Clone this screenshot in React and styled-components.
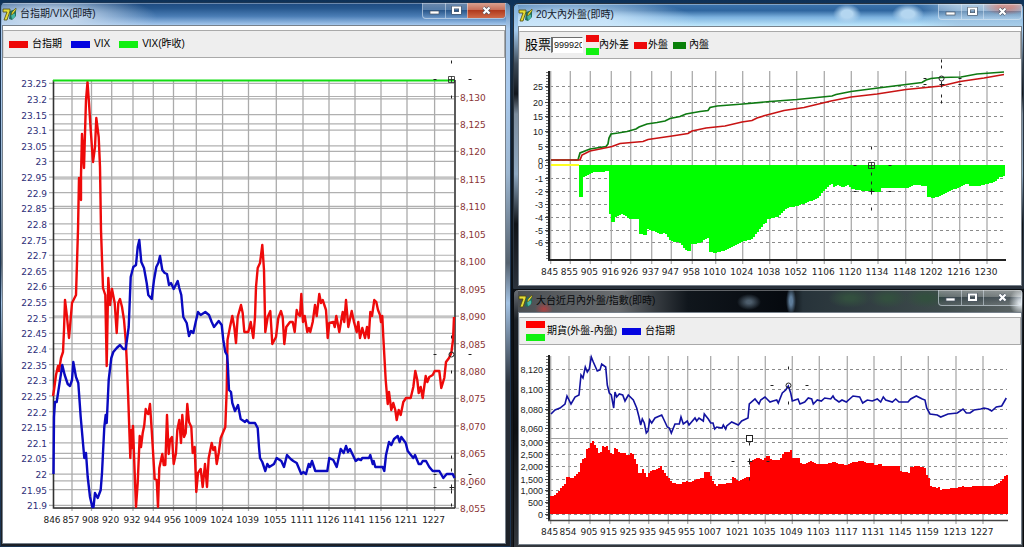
import {Component} from "react";
import styled, {createGlobalStyle} from "styled-components";

const GlobalStyle = createGlobalStyle`
  *, *::before, *::after {
    box-sizing: border-box;
  }

  body {
    margin: 0;
    background: #16232f;
    font-family: "Liberation Sans", "Noto Sans CJK TC", sans-serif;
    font-size: 10px;
    color: #000;
  }
`

const Desktop = styled.main`
  display: grid;
  grid-template-columns: 1fr 1fr;
  column-gap: 2px;
  align-items: start;
  min-height: 100vh;
  background: linear-gradient(#0e3157 0, #123a63 24px, #16232f 90px, #0b0f14 300px, #1a1d22 100%);
`

const Column = styled.div`
  display: flex;
  flex-direction: column;
  min-width: 0;
  padding-top: ${props => props.$top}px;
`

const skins = {
    active: {
        frame: `linear-gradient(#5b82ab 0, #a9c9ec 26px, #a9c9ec 90px, #9cb6d0 170px, #55616e 260px, #a4c3e4 300px, #2b323c 380px, #1c2026 100%)`,
        title: `
          radial-gradient(ellipse 110px 24px at 45px 14px, rgba(205, 222, 240, 0.85) 30%, rgba(205, 222, 240, 0) 100%),
          linear-gradient(#1d4a80 0, #27588f 25%, #4a7db5 60%, #a6c9ef 100%)`,
        text: '#14202c',
        edge: '#1b3553'
    },
    glass: {
        frame: `linear-gradient(#7fb0dc 0, #a6cdf0 26px, #3c4a58 60px, #11161c 90px, #7c8c9c 110px, #8fa9c2 170px, #0f1318 220px, #2b323c 100%)`,
        title: `
          radial-gradient(ellipse 14px 10px at 329px 10px, #b4d6f0 40%, rgba(168, 205, 238, 0) 100%),
          radial-gradient(ellipse 16px 10px at 390px 10px, #b4d6f0 40%, rgba(168, 205, 238, 0) 100%),
          radial-gradient(ellipse 24px 9px at 488px 2px, rgba(196, 84, 70, 0.8) 30%, rgba(196, 84, 70, 0) 100%),
          radial-gradient(ellipse 130px 26px at 50px 18px, rgba(204, 230, 250, 0.9) 30%, rgba(196, 222, 246, 0) 100%),
          linear-gradient(90deg, rgba(160, 195, 225, 0) 400px, rgba(160, 195, 225, 0.7) 440px),
          linear-gradient(#3c74ad 0, #2f669f 30%, #7db2df 60%, #bfe8fc 100%)`,
        text: '#14202c',
        edge: '#28333f'
    },
    dark: {
        frame: `linear-gradient(#6a6f75 0, #1b2026 30px, #0d1014 140px, #33383e 100%)`,
        title: `
          radial-gradient(ellipse 12px 8px at 231px 12px, #4d5d6b 20%, rgba(77, 93, 107, 0) 100%),
          radial-gradient(ellipse 5px 14px at 273px 11px, #5f7d9a 30%, rgba(95, 125, 154, 0) 100%),
          radial-gradient(ellipse 22px 10px at 332px 8px, #33503f 20%, rgba(51, 80, 63, 0) 100%),
          radial-gradient(ellipse 20px 10px at 370px 8px, #33503f 20%, rgba(51, 80, 63, 0) 100%),
          radial-gradient(ellipse 22px 10px at 408px 8px, #33503f 20%, rgba(51, 80, 63, 0) 100%),
          radial-gradient(ellipse 12px 14px at 503px 12px, #dfe6ea 20%, rgba(223, 230, 234, 0) 100%),
          radial-gradient(ellipse 9px 7px at 26px 19px, rgba(200, 60, 60, 0.7) 10%, rgba(200, 60, 60, 0) 100%),
          linear-gradient(90deg, #4b4f53 0, #6a6d70 100px, #3a3f44 135px, #10161c 170px, #05090e 270px, #27333a 285px, #3d4a4b 420px, #5d6566 100%)`,
        text: '#07090b',
        edge: '#0a0c0f'
    }
}

const WindowFrame = styled.section`
  border: 1px solid ${props => props.$skin.edge};
  border-radius: 5px 5px 0 0;
  padding: ${props => props.$side === 'left' ? '0 4px 2px 1px' : '0 1px 2px 4px'};
  background: ${props => props.$skin.frame};
  overflow: hidden;
`

const TitleBar = styled.header`
  display: flex;
  align-items: center;
  height: 22px;
  background: ${props => props.$skin.title};
  box-shadow: inset 0 1px 0 rgba(255, 255, 255, 0.35);
`

const Title = styled.h1`
  flex: 1;
  margin: 0 0 0 3px;
  font-size: 10px;
  line-height: 14px;
  font-weight: normal;
  color: ${props => props.$skin.text};
  white-space: nowrap;
`

const WindowButtons = styled.div`
  display: flex;
  align-self: flex-start;
  border: 1px solid rgba(225, 236, 246, 0.6);
  border-top: 0;
  border-radius: 0 0 4px 4px;
  overflow: hidden;
`

const WindowButton = styled.button`
  display: flex;
  align-items: center;
  justify-content: center;
  width: ${props => props.$close ? 38 : 22}px;
  height: 15px;
  padding: 0;
  border: 0;
  border-left: ${props => props.$first ? 0 : 1}px solid rgba(225, 236, 246, 0.5);
  background: ${props => props.$red
    ? 'linear-gradient(#d9a08f 0, #c8705a 45%, #b03a1e 50%, #cf6a48 100%)'
    : 'linear-gradient(rgba(255, 255, 255, 0.35) 0, rgba(255, 255, 255, 0.2) 45%, rgba(10, 30, 60, 0.15) 50%, rgba(255, 255, 255, 0.1) 100%)'};
`

const Body = styled.div`
  border: 1px solid #77818b;
  background: #fff;
`

const ToolStrip = styled.div`
  display: flex;
  align-items: center;
  height: 28px;
  margin-top: 4px;
  padding-left: ${props => props.$pad}px;
  border: 1px solid #a9a9a9;
  border-left-color: #d8d8d8;
  background: #eeeeee;
  white-space: nowrap;
  overflow: hidden;
`

const Legend = styled.ul`
  display: flex;
  align-items: center;
  gap: ${props => props.$gap}px;
  margin: 0;
  padding: 0;
  list-style: none;
`

const LegendItem = styled.li`
  display: flex;
  align-items: center;
  gap: ${props => props.$gap}px;
  line-height: 14px;
`

const Swatch = styled.span`
  width: ${props => props.$width}px;
  height: 7px;
  background: ${props => props.$color};
`

const SwatchPair = styled.span`
  display: flex;
  flex-direction: column;
  gap: 6px;
  background: #f5e9e9;
`

const StockLabel = styled.label`
  font-size: 13px;
  line-height: 18px;
`

const StockInput = styled.input`
  width: 32px;
  height: 16px;
  margin-right: 3px;
  padding: 0 0 0 1px;
  border: 1px solid #fff;
  border-top-color: #6d6d6d;
  border-left: 2px solid #6d6d6d;
  border-radius: 0;
  background: #fff;
  font-family: "Liberation Sans", sans-serif;
  font-size: 9px;
  color: #111;
  outline: none;
`

const ChartSvg = styled.svg`
  display: block;
  width: 100%;
  height: auto;
`

const AxisText = styled.text`
  font-family: ${props => props.$narrow ? '"Liberation Sans"' : '"DejaVu Sans"'}, sans-serif;
  font-size: 9px;
  fill: ${props => props.$color || '#222'};
  text-anchor: ${props => props.$anchor || 'middle'};
`

const AppIcon = () => (
    <svg width="15" height="15" viewBox="0 0 15 15" aria-hidden="true">
        <path d="M8 4 L14 2 L14 9 L10 13 L7 12 Z" fill="#1f6e5e" />
        <path d="M9 8 Q11 5 13 7 Q14 11 10 12 Z" fill="#49b6a4" />
        <path d="M1 2 L8 2 L8 4 L5 13 L2 13 L5 5 L1 5 Z" fill="#e6dc35" stroke="#4d4a10" strokeWidth="0.8" />
        <path d="M14 1 L10 5 L9 8 L11 7 L14 3 Z" fill="#e6dc35" stroke="#4d4a10" strokeWidth="0.6" />
    </svg>
)

const MinimizeGlyph = () => (
    <svg width="11" height="9" viewBox="0 0 11 9" aria-hidden="true">
        <rect x="1" y="5" width="9" height="3" fill="#fff" stroke="#4b5665" strokeWidth="0.7" />
    </svg>
)

const MaximizeGlyph = () => (
    <svg width="11" height="9" viewBox="0 0 11 9" aria-hidden="true">
        <rect x="2" y="1.5" width="7" height="5.5" fill="none" stroke="#4b5665" strokeWidth="3.2" />
        <rect x="2" y="1.5" width="7" height="5.5" fill="none" stroke="#fff" strokeWidth="2" />
    </svg>
)

const CloseGlyph = () => (
    <svg width="11" height="9" viewBox="0 0 11 9" aria-hidden="true">
        <path d="M2.5 1.5 L8.5 7.5 M8.5 1.5 L2.5 7.5" stroke="#4b5665" strokeWidth="3.4" />
        <path d="M2.5 1.5 L8.5 7.5 M8.5 1.5 L2.5 7.5" stroke="#fff" strokeWidth="2.2" />
    </svg>
)

const vixRed = "53,396 54,390 56,375 58,366 59,371 61,358 63,352 64,330 65,300 67,317 69,338 70,327 72,303 76,295 78,230 79,178 81,200 81,175 82,134 84,168 85,133 86,100 87.5,82 89,103 90.5,127 93,162 95,147 96.3,118 98.7,137 100,167 101,230 103,288 105.3,295 106.7,366 108.3,278 110,305 112,289 114.7,303 116.7,333 118.3,303 120,299 122,307 124,320 125.7,340 126.7,360 128.3,400 130.3,458 131.3,430 132,448 133,426 134.3,463 136,507 137.7,483 139.7,436 141,447 142.7,433 144.3,425 145.7,409 147,413 148.3,414 150,404 151.7,430 154.7,479 156.7,480 158,507 159.3,468 162.3,454 163.7,465 165.3,465 167,415 168.7,454 170,440 172,437 173.7,464 176,453 177.3,430 179.3,420 181,443 182.3,415 184,437 185.7,433 187.3,404 189,422 191.3,427 192.7,453 194.7,447 196.3,492 198,473 200.7,469 202.7,487 205,464 207,487 208.7,458 211.7,443 213.3,450 215,447 216.7,464 218.7,453 220.7,438 225.3,427 226.7,390 227.5,340 230,327 232.3,316 234.3,327 236,343 237.7,317 241,305 242.7,313 244.3,332 248.3,332 250.7,322 253.3,338 255,317 256,287 257.7,268 260,263 262.3,245 264,270 265.3,332 267.7,317 270.3,311 272.3,344 276,337 278.3,318 281,311 282.7,317 284.3,344 286.3,327 290,322 292.7,322 294.7,332 296.7,310 298,314 300,316 301.3,294 303,322 304.7,316 307.3,332 309,328 310.3,332 312.7,322 315,305 316.7,316 319.3,294 321,303 322.7,300 326,310 327.7,338 329.3,323 333.3,322 334.7,327 336.3,316 339.3,332 342.7,312 344.3,322 346,300 348.3,327 351.7,311 354,322 356.7,332 358.3,322 360,338 362.3,328 365,338 367,327 368.7,338 370.3,312 372,316 374.3,300 376.3,302 378,310 380,315 381,322 382.3,316 383.3,337 384.3,355 385.7,380 387.7,404 389,392 391.3,410 393.3,403 395.3,410 396.7,420 398.7,410 400.7,415 403.3,402 406,398 410.7,398 413.3,387 415.3,371 417.3,380 418.7,393 420.7,387 422.7,398 425.7,376 427.3,382 429.3,377 432.7,375 434.7,371 439.3,371 441.3,388 444.3,378 446,362 449,358 451.3,353 453,340 454,317"

const vixBlue = "53.5,474 54,417 55,402 56.7,402 62.3,365 64.7,375 67.7,384 70,386 72,380 73.3,362 76,377 78.3,383 80.7,417 84.3,458 86,453 87.7,477 90,497 92.3,507 93.5,507 95,493 97.7,498 100.7,490 102,473 104.3,427 105.7,415 106.7,423 108.7,380 111.3,358 113.3,352 116.7,348 120,345 123.3,349 125.7,349 128.7,327 130.7,277 133.3,267 136,265 137.7,247 139.3,240 141.3,262 144,268 146.7,283 148.3,295 151.7,299 154,280 156.3,267 158.3,263 160,256 162.3,270 164.7,273 167,274 169,285 171,283 173.7,289 177.7,281 179.3,288 181.3,295 183.3,317 186.7,323 189,336 191,331 193.3,333 195.7,322 198,312 200.7,315 205.3,312 209,315 211.7,322 214,327 218.7,321 221.7,325 223.3,340 225.3,352 227,355 227.7,363 229,390 231,392 232.3,403 235,411 238,405 240.7,419 245,422 246.7,420 249.3,423 255,423 257.7,428 259,447 260,458 262.3,462 265.3,471 267.3,464 269.3,467 274,464 276.7,458 281.3,461 284,467 287,455 290.7,459 293.3,461 296.7,463 301.3,474 303.3,472 306,474 308.7,464 310,467 312,461 315.3,471 327.3,471 329.3,458 333.3,460 336.7,467 340.7,449 343.7,453 346,446 348,452 350,449 355.7,461 358.3,459 361,460 362.3,458 369,458 370.3,455 372.7,464 373.7,461 375.3,467 382.7,467 384.3,471 386,455 389,442 391.3,445 394,439 397.7,436 399.7,442 401.3,437 405.7,443 407.7,451 413.3,458 415,455 418.7,464 421,464 422.7,461 426,461 429.3,467 432.7,471 439.3,471 443.3,478 446.7,474 452.7,474 454.5,478"

const outerGreen = "551,160 578,160 580,153 590,149 606,146.5 608,144 609,138 611,134 618,133 627,131.5 636,129 639,127 647,124 657,122.5 665,121 670,118.5 680,116.5 686,114 700,111.5 708,110.5 710,107.5 717,106 743,104 770,101.5 797,99.5 832,96 836,94.5 851,91.5 878,88 906,84.5 922,82.5 926,80 931,78.5 941,77.5 961,77 977,74 1004,72"

const outerRed = "551,160 580,160 582,155 590,151 600,149 612,146.5 620,143.5 643,141.5 648,139.5 672,136 688,133.5 692,131 706,128 725,126 742,122 752,120.5 757,118 765,115.5 784,110.5 804,107.5 831,101 851,97 877,94 906,89.5 941,86 960,81.5 984,78 1004,74.5"

const netArea = [
    [579, 197], [581, 197], [582, 178], [585, 176], [592, 172], [600, 172], [607, 171], [608, 212], [610, 216], [611, 222], [614, 222], [615, 217], [621, 214], [626, 217], [630, 219], [637, 219], [638, 233], [639, 234], [645, 235], [646, 229], [652, 231], [660, 234], [664, 233], [670, 241], [680, 243], [684, 250], [689, 251], [690, 244], [700, 243], [704, 239], [708, 237], [709, 252], [714, 253], [725, 250], [733, 246], [742, 241], [750, 240], [756, 233], [764, 223], [766, 223], [767, 219], [777, 217], [786, 208], [797, 206], [807, 202], [816, 199], [822, 192], [829, 185], [831, 184], [832, 180], [833, 187], [838, 185], [842, 187], [847, 185], [851, 189], [864, 191], [879, 192], [881, 188], [907, 188], [914, 185], [925, 186], [927, 197], [932, 198], [939, 196], [947, 192], [961, 186], [966, 183], [969, 186], [977, 186], [994, 182], [999, 177], [1005, 176]
]

const indexBlue = "551,414 555,410 560,408 565,404 567,396 571,404 575,397 579,395 581,375 583,378 585.3,367 587.3,372 589.3,369 591.3,357 593.3,362 597.3,371 600,370 601.7,364 605.7,367 607.3,385 609.3,393 611.3,395 613.7,408 615,392 616.7,397 619.3,394 622.7,395 625,401 628.3,395 633.3,400 636.7,408 639,417 640.7,425 642.3,419 644.3,423 646.3,433 648,431 649.7,420 651.7,423 655,418 661.7,415 665,422 667.3,427 669.3,428 671.3,433 675,424 679.3,424 681,417 683.3,424 687.3,421 689,425 695,418 696.7,421 699,418 703.3,421 704.3,414 708.3,419 710.7,423 713,423 714.7,429 716.7,427 722,428 723.3,425 725.7,429 726.7,426 731.7,422 738.3,425 741.7,421 748,418 749.3,404 755,399 759,404 760.7,400 765,397 770,402 773,401 776.7,400 778.3,403 782.3,393 785.7,390 788.3,386 790.7,393 792.3,401 798,399 800,404 804.7,402 808.3,398 811.7,399 813.3,404 817.3,400 821.3,401 824.7,398 830.7,399 833,396 834.7,399 839,402 842,400 846.3,402 853,396 859.7,397 862.7,403 867.3,400 872.3,401 877.3,399 880.7,402 883.3,397 885.7,400 892.3,402 895.7,399 899,402 908,402 910.7,399 916.3,396 922.3,399 925,400 926.7,408 930,414 937.3,415 940.7,417 948,414 957.3,413 963,409 966.3,413 970,413 974,410 980.7,409 984,408 988.3,409 991.7,411 996.3,407 1001.7,406 1006.3,398"

const volumeArea = [
    [550, 496], [554, 495], [563, 485], [565, 483], [566, 477], [572, 478], [578, 472], [581, 459], [585, 457], [586, 449], [589, 448], [591, 438], [593, 443], [596, 448], [598, 453], [600, 452], [601, 445], [604, 447], [607, 446], [609, 453], [612, 454], [613, 459], [614, 448], [617, 450], [619, 453], [625, 453], [627, 457], [629, 452], [633, 455], [635, 462], [637, 465], [638, 473], [641, 473], [642, 469], [646, 477], [649, 471], [657, 469], [660, 466], [664, 473], [668, 478], [672, 483], [680, 484], [681, 480], [683, 483], [687, 480], [689, 483], [695, 479], [702, 478], [704, 472], [709, 472], [711, 480], [713, 481], [715, 487], [718, 484], [730, 483], [732, 477], [738, 481], [743, 478], [748, 477], [749, 462], [757, 457], [762, 460], [767, 455], [771, 460], [779, 460], [783, 452], [789, 452], [790, 450], [791, 451], [792, 458], [798, 458], [800, 463], [804, 464], [810, 461], [816, 464], [824, 464], [830, 463], [833, 461], [839, 464], [846, 465], [852, 462], [861, 461], [867, 463], [873, 463], [874, 465], [880, 464], [882, 466], [898, 466], [899, 471], [909, 473], [910, 467], [917, 466], [925, 468], [926, 475], [929, 480], [930, 486], [936, 488], [938, 487], [940, 490], [942, 489], [956, 488], [962, 486], [966, 487], [974, 486], [991, 486], [997, 484], [1002, 479], [1005, 475], [1008, 475]
]

// one column every 2px, so the outline keeps its bar steps
const stepPath = (points, base) => {
    let d = `M${points[0][0]} ${base}`
    let i = 0
    const last = points[points.length - 1][0]
    for (let x = points[0][0]; x < last; x += 2) {
        while (points[i + 1] && points[i + 1][0] <= x) {
            i++
        }
        const [x0, y0] = points[i]
        const [x1, y1] = points[i + 1]
        d += `V${Math.round(y0 + (y1 - y0) * (x - x0) / (x1 - x0))}H${Math.min(x + 2, last)}`
    }
    return `${d}V${base}Z`
}

const TimeAxis = ({ticks, top, bottom, baseline}) => (
    <g>
        {ticks.map(([label, x]) => (
            <g key={label}>
                <line x1={x} x2={x} y1={top} y2={bottom} stroke="#ababab" strokeWidth="1.3" />
                <AxisText x={x - 1} y={baseline}>{label}</AxisText>
            </g>
        ))}
    </g>
)

const DashedRows = ({rows, right}) => (
    <g>
        {rows.map(([label, y], i) => (
            <g key={i}>
                <path d={`M550 ${y}H${right}`} stroke="#8a8a8a" strokeDasharray="3 3" shapeRendering="crispEdges" />
                <path d={`M545 ${y}H549`} stroke="#444" shapeRendering="crispEdges" />
                <AxisText $narrow $anchor="end" x="543" y={y + 3}>{label}</AxisText>
            </g>
        ))}
    </g>
)

const Crosshair = ({x, y, shape}) => (
    <g stroke="#222" fill="none">
        <path d={`M${x - 18} ${y}h3M${x + 17} ${y}h3M${x} ${y - 19}v3M${x} ${y + 16}v3`} />
        {shape === 'box' && <path d={`M${x - 3} ${y - 3}h6v6h-6zM${x - 3} ${y}h6M${x} ${y - 3}v6`} strokeWidth="0.8" />}
        {shape === 'ring' && <circle cx={x} cy={y} r="2.5" />}
        {shape === 'plus' && <path d={`M${x - 2} ${y}h5M${x} ${y - 3}v6`} />}
    </g>
)

const VixChart = () => {
    const times = [['857', 72], ['908', 91.5], ['920', 111.7], ['932', 133], ['944', 153.3], ['956', 173.5], ['1009', 196.3], ['1024', 222.6], ['1039', 248.5], ['1055', 276.3], ['1111', 303], ['1126', 329], ['1141', 355], ['1156', 381], ['1211', 407], ['1227', 434.6]]
    const vix = Array.from({length: 28}, (_, i) => [String((2325 - i * 5) / 100), 83.3 + i * 15.63])
    const index = Array.from({length: 16}, (_, i) => [(8130 - i * 5).toLocaleString('en-US'), 96.5 + i * 27.45])
    return (
        <ChartSvg viewBox="3 58 502 485" role="img" aria-label="台指期/VIX">
            {vix.map(([label, y]) => (
                <g key={label}>
                    <path d={`M49 ${y}H454`} stroke="#b0b0b0" strokeWidth="1.2" />
                    <AxisText $color="#2e2e78" $anchor="end" x="47" y={y + 4}>{label}</AxisText>
                </g>
            ))}
            {index.map(([label, y]) => (
                <g key={label}>
                    <path d={`M54 ${y}H459`} stroke="#b0b0b0" strokeWidth="1.2" />
                    <AxisText $color="#8a3434" $anchor="start" x="460" y={y + 4}>{label}</AxisText>
                </g>
            ))}
            <TimeAxis ticks={times} top={80} bottom={511} baseline={523} />
            <AxisText x="52" y="523">846</AxisText>
            <path d="M53.5 80V508H455M455 80V508" fill="none" stroke="#333" strokeWidth="1.6" />
            <polyline points={vixRed} fill="none" stroke="#ee0a0a" strokeWidth="2.4" strokeLinejoin="round" />
            <polyline points={vixBlue} fill="none" stroke="#0a0ac0" strokeWidth="2.4" strokeLinejoin="round" />
            <path d="M53 80.5H454" stroke="#12dc12" strokeWidth="1.8" />
            <Crosshair x={451.5} y={79.5} shape="box" />
            <Crosshair x={451.5} y={354.5} shape="ring" />
            <Crosshair x={451.5} y={474.5} />
            <Crosshair x={451.5} y={487.5} shape="plus" />
        </ChartSvg>
    )
}

const OrderChart = () => {
    const times = [['845', 550.7], ['855', 570.3], ['905', 590.3], ['916', 611.3], ['926', 630.7], ['937', 651.7], ['947', 671.3], ['958', 692.3], ['1010', 715.7], ['1024', 742.7], ['1038', 769.7], ['1052', 796.7], ['1106', 824.3], ['1120', 851.3], ['1134', 878], ['1148', 905.7], ['1202', 932.3], ['1216', 959.7], ['1230', 987]]
    const rows = [['25', 86.5], ['20', 102.5], ['15', 116.5], ['10', 131.5], ['5', 146.5], ['0', 160.5], ['0', 165.5], ['-1', 178.5], ['-2', 191.5], ['-3', 204.5], ['-4', 217.5], ['-5', 230.5], ['-6', 242.5]]
    return (
        <ChartSvg viewBox="519 59 502 226" role="img" aria-label="20大內外盤">
            <DashedRows rows={rows} right={1005} />
            <TimeAxis ticks={times} top={71} bottom={264} baseline={275} />
            <path d="M549 71V260H1006" fill="none" stroke="#222" strokeWidth="2" />
            <path d="M547 72V260" stroke="#444" strokeWidth="1.5" strokeDasharray="1 2" />
            <path d={stepPath(netArea, 165)} fill="#00ff00" shapeRendering="crispEdges" />
            <path d="M551 165H579" stroke="#ffff20" strokeWidth="2" />
            <polyline points={outerGreen} fill="none" stroke="#0e7a12" strokeWidth="1.7" />
            <polyline points={outerRed} fill="none" stroke="#c81414" strokeWidth="1.7" />
            <Crosshair x={941.5} y={78.5} shape="ring" />
            <Crosshair x={941.5} y={84.5} shape="plus" />
            <Crosshair x={871.5} y={165.5} shape="box" />
            <Crosshair x={871.5} y={191.5} shape="plus" />
        </ChartSvg>
    )
}

const VolumeChart = () => {
    const times = [['845', 550.7], ['854', 569], ['905', 590], ['915', 609.7], ['925', 629.3], ['935', 648.7], ['945', 668.3], ['955', 687.7], ['1007', 710.7], ['1021', 738.3], ['1035', 765.3], ['1049', 792.3], ['1103', 819.3], ['1117', 847.3], ['1131', 874], ['1145', 901.3], ['1159', 928.3], ['1213', 956], ['1227', 983]]
    const rows = [['8,120', 369.5], ['8,100', 389.5], ['8,080', 409.5], ['8,060', 428.5], ['3,000', 442.5], ['2,500', 454.5], ['2,000', 466.5], ['1,500', 479.5], ['1,000', 490.5], ['500', 502.5], ['0', 514.5]]
    return (
        <ChartSvg viewBox="519 345 502 199" role="img" aria-label="大台近月內外盤/指數">
            <DashedRows rows={rows} right={1007} />
            <TimeAxis ticks={times} top={356} bottom={524} baseline={535} />
            <path d="M550 438.5H1008" stroke="#a0a0a0" />
            <path d={stepPath(volumeArea, 514)} fill="#ff0000" shapeRendering="crispEdges" />
            <path d="M549 355V521" stroke="#222" strokeWidth="2" />
            <path d="M547 356V520" stroke="#444" strokeWidth="1.5" strokeDasharray="1 2" />
            <path d="M548 520.5H1008" stroke="#444" strokeWidth="1.5" />
            <polyline points={indexBlue} fill="none" stroke="#1212a0" strokeWidth="1.6" />
            <Crosshair x={788.5} y={385.5} shape="ring" />
            <Crosshair x={749.5} y={461.5} shape="plus" />
            <rect x="746.5" y="435.5" width="6" height="6" fill="#fff" stroke="#222" />
        </ChartSvg>
    )
}

const ChartWindow = ({title, skin, side, tools, pad, children}) => (
    <WindowFrame $skin={skins[skin]} $side={side}>
        <TitleBar $skin={skins[skin]}>
            <AppIcon />
            <Title $skin={skins[skin]}>{title}</Title>
            <WindowButtons>
                <WindowButton $first aria-label="最小化"><MinimizeGlyph /></WindowButton>
                <WindowButton aria-label="最大化"><MaximizeGlyph /></WindowButton>
                <WindowButton $close $red={skin === 'active'} aria-label="關閉"><CloseGlyph /></WindowButton>
            </WindowButtons>
        </TitleBar>
        <Body>
            <ToolStrip $pad={pad}>{tools}</ToolStrip>
            {children}
        </Body>
    </WindowFrame>
)

class App extends Component {

    constructor(props) {
        super(props);
        this.state = {
            stock: '999920'
        };
    }

    render() {
        return (
            <Desktop>
                <GlobalStyle />
                <Column $top={2}>
                    <ChartWindow title="台指期/VIX(即時)" skin="active" side="left" pad={5} tools={
                        <Legend $gap={9}>
                            <LegendItem $gap={4}><Swatch $width={19} $color="#ee0808" />台指期</LegendItem>
                            <LegendItem $gap={4}><Swatch $width={19} $color="#0404e0" />VIX</LegendItem>
                            <LegendItem $gap={4}><Swatch $width={19} $color="#10f010" />VIX(昨收)</LegendItem>
                        </Legend>
                    }>
                        <VixChart />
                    </ChartWindow>
                </Column>
                <Column $top={3}>
                    <ChartWindow title="20大內外盤(即時)" skin="glass" side="right" pad={5} tools={
                        <>
                            <StockLabel htmlFor="stock">股票</StockLabel>
                            <StockInput id="stock" value={this.state.stock} onChange={e => this.setState({
                                stock: e.target.value
                            })} />
                            <Legend $gap={5}>
                                <LegendItem $gap={0}>
                                    <SwatchPair>
                                        <Swatch $width={13} $color="#ee0808" />
                                        <Swatch $width={13} $color="#10f010" />
                                    </SwatchPair>
                                    內外差
                                </LegendItem>
                                <LegendItem $gap={1}><Swatch $width={13} $color="#ee0808" />外盤</LegendItem>
                                <LegendItem $gap={3}><Swatch $width={13} $color="#0a800a" />內盤</LegendItem>
                            </Legend>
                        </>
                    }>
                        <OrderChart />
                    </ChartWindow>
                    <ChartWindow title="大台近月內外盤/指數(即時)" skin="dark" side="right" pad={6} tools={
                        <Legend $gap={5}>
                            <LegendItem $gap={2}>
                                <SwatchPair>
                                    <Swatch $width={19} $color="#ff0000" />
                                    <Swatch $width={19} $color="#10f010" />
                                </SwatchPair>
                                期貨(外盤-內盤)
                            </LegendItem>
                            <LegendItem $gap={4}><Swatch $width={19} $color="#0404e0" />台指期</LegendItem>
                        </Legend>
                    }>
                        <VolumeChart />
                    </ChartWindow>
                </Column>
            </Desktop>
        );
    }
}

export default App
